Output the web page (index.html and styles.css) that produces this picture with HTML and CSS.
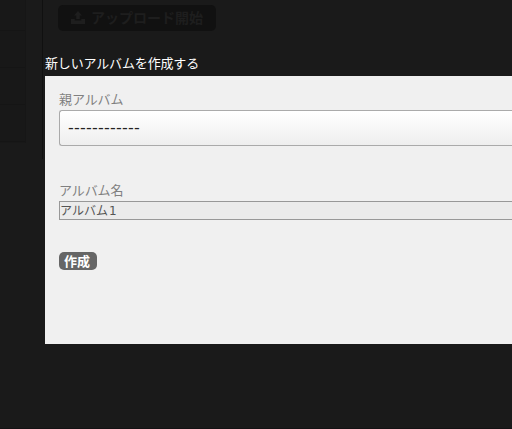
FILE: index.html
```html
<!DOCTYPE html>
<html lang="ja">
<head>
<meta charset="utf-8">
<title>新しいアルバムを作成する</title>
<link rel="stylesheet" href="styles.css">
</head>
<body>
<div class="page">
  <nav class="sidebar">
    <div class="menu"><div class="item first"></div><div class="item"></div><div class="item"></div><div class="item"></div></div>
  </nav>
  <main class="main">
    <button class="upload" type="button">
      <svg class="upload-icon" viewBox="0 0 14 13"><path d="M7 0 11 4.5H8.7V8H5.3V4.5H3ZM0 8H3.7V9.5H10.3V8H14V13H0Z"/></svg>
      <span>アップロード開始</span>
    </button>
    <section class="dialog">
      <h1 class="title">新しいアルバムを作成する</h1>
      <form class="panel">
        <label class="label parent">親アルバム</label>
        <div class="select"><span>------------</span></div>
        <label class="label name">アルバム名</label>
        <div class="input"><span>アルバム</span><span class="number">1</span></div>
        <button class="create" type="button">作成</button>
      </form>
    </section>
  </main>
</div>
</body>
</html>
```
FILE: styles.css
```css
* { box-sizing: border-box; }
body {
  margin: 0;
  background: #1a1a1a;
  font-family: "Liberation Sans", "Noto Sans CJK JP", sans-serif;
  overflow: hidden;
}
.page { display: flex; width: 512px; height: 429px; border-bottom: 1px solid #141214; }
.sidebar { width: 43px; flex: none; height: 159px; border-right: 1px solid #101010; }
.menu { width: 26px; height: 143px; background: #181818; border-right: 1px solid #161616; }
.item { height: 37px; border-bottom: 1px solid #151515; }
.item.first { height: 31px; }
.main { flex: 1; min-width: 0; padding: 5px 0 0 2px; }
.upload {
  display: flex;
  align-items: center;
  gap: 6px;
  width: 158px;
  height: 26px;
  margin: 0 0 0 13px;
  padding: 0 0 2px 13px;
  border: 0;
  border-radius: 5px;
  background: #111;
  color: #1e1e1e;
  font: bold 14px/24px "Noto Sans CJK JP", sans-serif;
  white-space: nowrap;
}
.upload-icon { width: 14px; height: 13px; flex: none; fill: #1e1e1e; }
.dialog { margin-top: 22px; }
.title {
  height: 23px;
  margin: 0;
  color: #fff;
  font: 400 13px/20px "Noto Sans CJK JP", sans-serif;
  letter-spacing: -0.15px;
}
.panel {
  display: flex;
  flex-direction: column;
  align-items: flex-start;
  height: 268px;
  padding: 14px 0 0 14px;
  background: #f0f0f0;
}
.label {
  height: 20px;
  color: #808080;
  font: 13px/18px "Noto Sans CJK JP", sans-serif;
  letter-spacing: -0.1px;
}
.select {
  width: 100%;
  height: 36px;
  padding-left: 8px;
  border: 1px solid #aaa;
  border-right: 0;
  border-radius: 3px 0 0 3px;
  background: linear-gradient(#fff, #eee);
  color: #222;
  font: 16px/34px "DejaVu Sans", sans-serif;
  letter-spacing: 0.22px;
}
.name { margin-top: 35px; }
.input {
  width: 100%;
  height: 19px;
  border: 1px solid #989898;
  border-right: 0;
  background: #ebebeb;
  color: #555;
  font: 12px/16px "Noto Sans CJK JP", sans-serif;
}
.number { margin-left: 1px; font-family: "DejaVu Sans", sans-serif; }
.create {
  width: 38px;
  height: 18px;
  margin: 32px 0 0;
  padding: 0 2px 1px 0;
  border: 0;
  border-radius: 5px;
  background: #666;
  color: #fff;
  font: bold 13px/16px "Noto Sans CJK JP", sans-serif;
}
```
